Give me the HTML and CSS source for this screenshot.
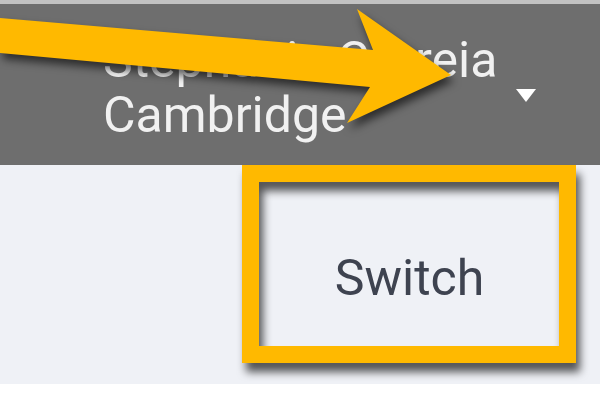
FILE: index.html
```html
<!DOCTYPE html>
<html lang="en">
<head>
    <meta charset="UTF-8">
    <meta name="viewport" content="width=device-width, initial-scale=1.0">
    <title>Switch account</title>
    <link rel="stylesheet" href="styles.css">
</head>
<body>
    <div class="top-line"></div>

    <header class="account-bar">
        <div class="account-name">Stephanie Correia<br>Cambridge</div>
        <span class="caret"></span>
    </header>

    <main class="menu-area">
        <div class="switch-frame">
            <div class="switch-item">Switch</div>
        </div>
    </main>

    <!-- Flèche d'annotation par-dessus l'en-tête -->
    <svg class="callout-arrow" width="600" height="170" viewBox="0 0 600 170">
        <polygon points="0,18 373,50 357,9 451,75 347,123 370,87 0,53" fill="#ffb900"/>
    </svg>
</body>
</html>
```

FILE: styles.css
```css
/* Page de base */
body {
    margin: 0;
    font-family: Roboto, 'Liberation Sans', sans-serif;
    background: #fff;
    height: 400px;
    overflow: hidden;
    position: relative;
}

.top-line {
    height: 4px;
    background: #c2c2c2;
}

/* Barre du compte */
.account-bar {
    height: 162px;
    background: #6e6e6e;
    display: flex;
    align-items: flex-start;
    padding-left: 103px;
    box-sizing: border-box;
}

.account-name {
    padding-top: 29px;
    font-size: 50px;
    line-height: 55px;
    color: #f1f1f1;
    width: 413px;
}

.caret {
    margin-top: 85px;
    width: 0;
    height: 0;
    border-left: 10px solid transparent;
    border-right: 10px solid transparent;
    border-top: 13px solid #fff;
}

/* Zone du menu */
.menu-area {
    height: 219px;
    background: #eff1f6;
    padding-left: 242px;
    box-sizing: border-box;
}

.switch-frame {
    position: relative;
    width: 334px;
    height: 198px;
    margin-top: -1px;
}

/* Cadre d'annotation jaune par-dessus le bouton */
.switch-frame::after {
    content: '';
    position: absolute;
    inset: 0;
    border: 17px solid #ffb900;
    filter: drop-shadow(4px 9px 4px rgba(0, 0, 0, 0.65));
}

.switch-item {
    padding-top: 84px;
    padding-left: 1px;
    font-size: 50px;
    color: #3e4350;
    text-align: center;
}

.callout-arrow {
    position: absolute;
    top: 0;
    left: 0;
    filter: drop-shadow(3px 6px 4px rgba(0, 0, 0, 0.6));
}
```
